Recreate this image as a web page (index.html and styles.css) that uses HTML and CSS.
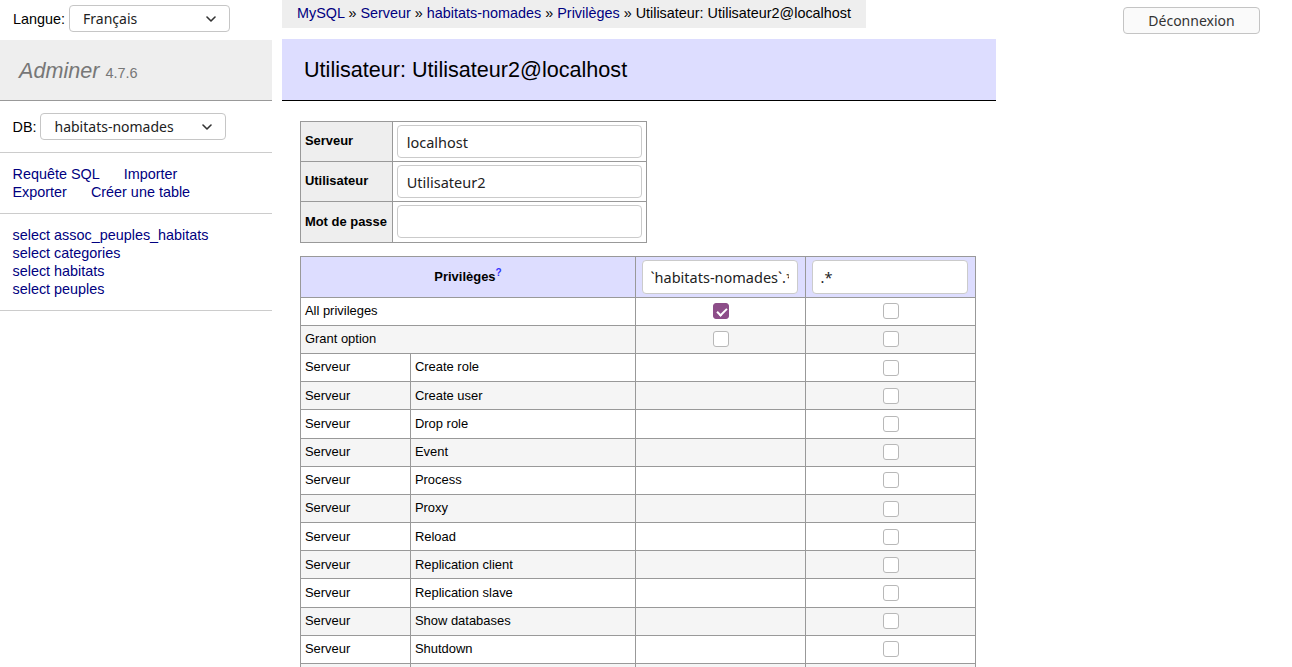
FILE: index.html
```html
<!DOCTYPE html>
<html lang="fr">
<head>
<meta charset="utf-8">
<title>Privilèges: Utilisateur2@localhost - Adminer</title>
<link rel="stylesheet" href="styles.css">
</head>
<body>
<aside class="side">
  <form class="lang">
    <label for="lang">Langue:</label>
    <span class="sel sel-lang">
      <select id="lang"><option>Français</option></select>
      <svg width="10" height="6" viewBox="0 0 10 6"><path d="M1 1l4 4 4-4" fill="none" stroke="#333" stroke-width="1.6" stroke-linecap="round" stroke-linejoin="round"/></svg>
    </span>
  </form>
  <h1><a class="brand" href="#">Adminer</a> <span class="version">4.7.6</span></h1>
  <div class="menu">
    <p class="dbs">
      <label for="db">DB:</label>
      <span class="sel sel-db">
        <select id="db"><option>habitats-nomades</option></select>
        <svg width="10" height="6" viewBox="0 0 10 6"><path d="M1 1l4 4 4-4" fill="none" stroke="#333" stroke-width="1.6" stroke-linecap="round" stroke-linejoin="round"/></svg>
      </span>
    </p>
    <p class="links"><a href="#">Requête SQL</a> <a href="#">Importer</a> <a href="#">Exporter</a> <a href="#">Créer une table</a></p>
    <ul class="tables">
      <li><a href="#">select</a> <a href="#">assoc_peuples_habitats</a></li>
      <li><a href="#">select</a> <a href="#">categories</a></li>
      <li><a href="#">select</a> <a href="#">habitats</a></li>
      <li><a href="#">select</a> <a href="#">peuples</a></li>
    </ul>
  </div>
</aside>

<main class="main">
  <nav class="crumb"><a href="#">MySQL</a> » <a href="#">Serveur</a> » <a href="#">habitats-nomades</a> » <a href="#">Privilèges</a> » Utilisateur: Utilisateur2@localhost</nav>
  <div class="content">
    <h2>Utilisateur: Utilisateur2@localhost</h2>
    <form>
      <table class="login">
        <tr><th>Serveur</th><td><input class="txt" value="localhost"></td></tr>
        <tr><th>Utilisateur</th><td><input class="txt" value="Utilisateur2"></td></tr>
        <tr><th>Mot de passe</th><td><input class="txt" type="text" value=""></td></tr>
      </table>
      <table class="grants">
        <colgroup><col class="g1"><col class="g2"><col class="g3"><col class="g4"></colgroup>
        <thead>
          <tr><th colspan="2">Privilèges<sup><a href="#" class="help">?</a></sup></th><td><input class="txt obj" value="`habitats-nomades`.*"></td><td><input class="txt obj" value=".*"></td></tr>
        </thead>
        <tbody>
          <tr><td colspan="2">All privileges</td><td class="c"><input type="checkbox" class="cb" checked></td><td class="c"><input type="checkbox" class="cb"></td></tr>
          <tr><td colspan="2">Grant option</td><td class="c"><input type="checkbox" class="cb"></td><td class="c"><input type="checkbox" class="cb"></td></tr>
          <tr><td>Serveur</td><td>Create role</td><td></td><td class="c"><input type="checkbox" class="cb"></td></tr>
          <tr><td>Serveur</td><td>Create user</td><td></td><td class="c"><input type="checkbox" class="cb"></td></tr>
          <tr><td>Serveur</td><td>Drop role</td><td></td><td class="c"><input type="checkbox" class="cb"></td></tr>
          <tr><td>Serveur</td><td>Event</td><td></td><td class="c"><input type="checkbox" class="cb"></td></tr>
          <tr><td>Serveur</td><td>Process</td><td></td><td class="c"><input type="checkbox" class="cb"></td></tr>
          <tr><td>Serveur</td><td>Proxy</td><td></td><td class="c"><input type="checkbox" class="cb"></td></tr>
          <tr><td>Serveur</td><td>Reload</td><td></td><td class="c"><input type="checkbox" class="cb"></td></tr>
          <tr><td>Serveur</td><td>Replication client</td><td></td><td class="c"><input type="checkbox" class="cb"></td></tr>
          <tr><td>Serveur</td><td>Replication slave</td><td></td><td class="c"><input type="checkbox" class="cb"></td></tr>
          <tr><td>Serveur</td><td>Show databases</td><td></td><td class="c"><input type="checkbox" class="cb"></td></tr>
          <tr><td>Serveur</td><td>Shutdown</td><td></td><td class="c"><input type="checkbox" class="cb"></td></tr>
          <tr><td>Serveur</td><td>Super</td><td></td><td class="c"><input type="checkbox" class="cb"></td></tr>
          <tr><td>Serveur</td><td>Create tablespace</td><td></td><td class="c"><input type="checkbox" class="cb"></td></tr>
          <tr><td>Serveur</td><td>APPLICATION_PASSWORD_ADMIN</td><td></td><td class="c"><input type="checkbox" class="cb"></td></tr>
          <tr><td>Serveur</td><td>AUDIT_ABORT_EXEMPT</td><td></td><td class="c"><input type="checkbox" class="cb"></td></tr>
          <tr><td>Serveur</td><td>AUDIT_ADMIN</td><td></td><td class="c"><input type="checkbox" class="cb"></td></tr>
          <tr><td>Serveur</td><td>AUTHENTICATION_POLICY_ADMIN</td><td></td><td class="c"><input type="checkbox" class="cb"></td></tr>
          <tr><td>Serveur</td><td>BACKUP_ADMIN</td><td></td><td class="c"><input type="checkbox" class="cb"></td></tr>
          <tr><td>Serveur</td><td>BINLOG_ADMIN</td><td></td><td class="c"><input type="checkbox" class="cb"></td></tr>
          <tr><td>Serveur</td><td>BINLOG_ENCRYPTION_ADMIN</td><td></td><td class="c"><input type="checkbox" class="cb"></td></tr>
          <tr><td>Serveur</td><td>CLONE_ADMIN</td><td></td><td class="c"><input type="checkbox" class="cb"></td></tr>
          <tr><td>Serveur</td><td>CONNECTION_ADMIN</td><td></td><td class="c"><input type="checkbox" class="cb"></td></tr>
          <tr><td>Serveur</td><td>ENCRYPTION_KEY_ADMIN</td><td></td><td class="c"><input type="checkbox" class="cb"></td></tr>
          <tr><td>Serveur</td><td>FIREWALL_EXEMPT</td><td></td><td class="c"><input type="checkbox" class="cb"></td></tr>
          <tr><td>Serveur</td><td>FLUSH_OPTIMIZER_COSTS</td><td></td><td class="c"><input type="checkbox" class="cb"></td></tr>
          <tr><td>Serveur</td><td>FLUSH_STATUS</td><td></td><td class="c"><input type="checkbox" class="cb"></td></tr>
          <tr><td>Serveur</td><td>FLUSH_TABLES</td><td></td><td class="c"><input type="checkbox" class="cb"></td></tr>
          <tr><td>Serveur</td><td>FLUSH_USER_RESOURCES</td><td></td><td class="c"><input type="checkbox" class="cb"></td></tr>
          <tr><td>Serveur</td><td>GROUP_REPLICATION_ADMIN</td><td></td><td class="c"><input type="checkbox" class="cb"></td></tr>
          <tr><td>Serveur</td><td>GROUP_REPLICATION_STREAM</td><td></td><td class="c"><input type="checkbox" class="cb"></td></tr>
          <tr><td>Serveur</td><td>INNODB_REDO_LOG_ARCHIVE</td><td></td><td class="c"><input type="checkbox" class="cb"></td></tr>
          <tr><td>Serveur</td><td>INNODB_REDO_LOG_ENABLE</td><td></td><td class="c"><input type="checkbox" class="cb"></td></tr>
          <tr><td>Serveur</td><td>PASSWORDLESS_USER_ADMIN</td><td></td><td class="c"><input type="checkbox" class="cb"></td></tr>
          <tr><td>Serveur</td><td>PERSIST_RO_VARIABLES_ADMIN</td><td></td><td class="c"><input type="checkbox" class="cb"></td></tr>
          <tr><td>Serveur</td><td>REPLICATION_APPLIER</td><td></td><td class="c"><input type="checkbox" class="cb"></td></tr>
          <tr><td>Serveur</td><td>REPLICATION_SLAVE_ADMIN</td><td></td><td class="c"><input type="checkbox" class="cb"></td></tr>
          <tr><td>Serveur</td><td>RESOURCE_GROUP_ADMIN</td><td></td><td class="c"><input type="checkbox" class="cb"></td></tr>
          <tr><td>Serveur</td><td>RESOURCE_GROUP_USER</td><td></td><td class="c"><input type="checkbox" class="cb"></td></tr>
          <tr><td>Serveur</td><td>ROLE_ADMIN</td><td></td><td class="c"><input type="checkbox" class="cb"></td></tr>
          <tr><td>Serveur</td><td>SENSITIVE_VARIABLES_OBSERVER</td><td></td><td class="c"><input type="checkbox" class="cb"></td></tr>
          <tr><td>Serveur</td><td>SERVICE_CONNECTION_ADMIN</td><td></td><td class="c"><input type="checkbox" class="cb"></td></tr>
          <tr><td>Serveur</td><td>SESSION_VARIABLES_ADMIN</td><td></td><td class="c"><input type="checkbox" class="cb"></td></tr>
          <tr><td>Serveur</td><td>SET_USER_ID</td><td></td><td class="c"><input type="checkbox" class="cb"></td></tr>
          <tr><td>Serveur</td><td>SHOW_ROUTINE</td><td></td><td class="c"><input type="checkbox" class="cb"></td></tr>
          <tr><td>Serveur</td><td>SYSTEM_USER</td><td></td><td class="c"><input type="checkbox" class="cb"></td></tr>
          <tr><td>Serveur</td><td>SYSTEM_VARIABLES_ADMIN</td><td></td><td class="c"><input type="checkbox" class="cb"></td></tr>
          <tr><td>Serveur</td><td>TABLE_ENCRYPTION_ADMIN</td><td></td><td class="c"><input type="checkbox" class="cb"></td></tr>
          <tr><td>Serveur</td><td>TELEMETRY_LOG_ADMIN</td><td></td><td class="c"><input type="checkbox" class="cb"></td></tr>
          <tr><td>Serveur</td><td>XA_RECOVER_ADMIN</td><td></td><td class="c"><input type="checkbox" class="cb"></td></tr>
          <tr><td>Serveur</td><td>File</td><td></td><td class="c"><input type="checkbox" class="cb"></td></tr>
          <tr><td>Base de données</td><td>Create routine</td><td class="c"><input type="checkbox" class="cb"></td><td class="c"><input type="checkbox" class="cb"></td></tr>
          <tr><td>Base de données</td><td>Create temporary tables</td><td class="c"><input type="checkbox" class="cb"></td><td class="c"><input type="checkbox" class="cb"></td></tr>
          <tr><td>Base de données</td><td>Lock tables</td><td class="c"><input type="checkbox" class="cb"></td><td class="c"><input type="checkbox" class="cb"></td></tr>
          <tr><td>Table</td><td>Alter</td><td class="c"><input type="checkbox" class="cb"></td><td class="c"><input type="checkbox" class="cb"></td></tr>
          <tr><td>Table</td><td>Create</td><td class="c"><input type="checkbox" class="cb"></td><td class="c"><input type="checkbox" class="cb"></td></tr>
          <tr><td>Table</td><td>Create view</td><td class="c"><input type="checkbox" class="cb"></td><td class="c"><input type="checkbox" class="cb"></td></tr>
          <tr><td>Table</td><td>Delete</td><td class="c"><input type="checkbox" class="cb"></td><td class="c"><input type="checkbox" class="cb"></td></tr>
          <tr><td>Table</td><td>Drop</td><td class="c"><input type="checkbox" class="cb"></td><td class="c"><input type="checkbox" class="cb"></td></tr>
          <tr><td>Table</td><td>Index</td><td class="c"><input type="checkbox" class="cb"></td><td class="c"><input type="checkbox" class="cb"></td></tr>
          <tr><td>Table</td><td>Insert</td><td class="c"><input type="checkbox" class="cb"></td><td class="c"><input type="checkbox" class="cb"></td></tr>
          <tr><td>Table</td><td>References</td><td class="c"><input type="checkbox" class="cb"></td><td class="c"><input type="checkbox" class="cb"></td></tr>
          <tr><td>Table</td><td>Select</td><td class="c"><input type="checkbox" class="cb"></td><td class="c"><input type="checkbox" class="cb"></td></tr>
          <tr><td>Table</td><td>Show view</td><td class="c"><input type="checkbox" class="cb"></td><td class="c"><input type="checkbox" class="cb"></td></tr>
          <tr><td>Table</td><td>Trigger</td><td class="c"><input type="checkbox" class="cb"></td><td class="c"><input type="checkbox" class="cb"></td></tr>
          <tr><td>Table</td><td>Update</td><td class="c"><input type="checkbox" class="cb"></td><td class="c"><input type="checkbox" class="cb"></td></tr>
          <tr><td>Colonne</td><td>Select</td><td class="c"><input type="checkbox" class="cb"></td><td class="c"><input type="checkbox" class="cb"></td></tr>
          <tr><td>Colonne</td><td>Insert</td><td class="c"><input type="checkbox" class="cb"></td><td class="c"><input type="checkbox" class="cb"></td></tr>
          <tr><td>Colonne</td><td>Update</td><td class="c"><input type="checkbox" class="cb"></td><td class="c"><input type="checkbox" class="cb"></td></tr>
          <tr><td>Colonne</td><td>References</td><td class="c"><input type="checkbox" class="cb"></td><td class="c"><input type="checkbox" class="cb"></td></tr>
          <tr><td>Routine</td><td>Alter routine</td><td class="c"><input type="checkbox" class="cb"></td><td class="c"><input type="checkbox" class="cb"></td></tr>
          <tr><td>Routine</td><td>Execute</td><td class="c"><input type="checkbox" class="cb"></td><td class="c"><input type="checkbox" class="cb"></td></tr>
        </tbody>
      </table>
      <p class="submit"><input type="submit" class="btn" value="Enregistrer"> <input type="submit" class="btn" value="Supprimer"></p>
    </form>
  </div>
</main>

<div class="logout">
  <button type="button" class="btn">Déconnexion</button>
</div>
</body>
</html>
```

FILE: styles.css
```css
body {
  margin: 0;
  color: #000;
  background: #fff;
  font: 14.4px/1.25 "Liberation Sans", Arial, sans-serif;
  display: flex;
  align-items: flex-start;
}

a { color: #000080; text-decoration: none; }

input, select, button { font-family: "Noto Sans", "Open Sans", sans-serif; }

/* select boxes */
.sel { position: relative; display: inline-block; vertical-align: middle; }
.sel select {
  -webkit-appearance: none;
  appearance: none;
  height: 27px;
  box-sizing: border-box;
  border: 1px solid #c6c6c6;
  border-radius: 4px;
  background: #fff;
  color: #222;
  font-size: 14px;
  padding: 0 30px 0 13px;
}
.sel svg { position: absolute; right: 14px; top: 11px; pointer-events: none; }
.sel-lang select { width: 161px; }
.sel-db select { width: 186px; padding-left: 14px; }

/* sidebar */
.side { width: 272px; flex: none; }
.lang {
  display: flex;
  align-items: center;
  gap: 4px;
  padding: 5px 13px 8px;
  margin: 0;
}
h1 {
  margin: 0;
  height: 27px;
  font-size: 21.6px;
  line-height: 27px;
  font-weight: normal;
  padding: 16.5px 19px;
  background: #eee;
  border-bottom: 1px solid #999;
  color: #777;
}
.brand { color: #777; font-style: italic; }
.version { color: #777; font-size: 14.5px; line-height: 1; }

.menu p, .tables {
  margin: 0;
  padding: 12px 12.5px;
  border-bottom: 1px solid #ccc;
}
.dbs { display: flex; align-items: center; gap: 3px; }
.links a { white-space: nowrap; margin-right: 20px; }
.tables { list-style: none; }

/* main */
.main { margin-left: 10px; flex: none; }
.crumb {
  display: inline-block;
  white-space: nowrap;
  background: #eee;
  height: 28px;
  line-height: 26px;
  padding: 0 15px;
  vertical-align: top;
}
.content { padding: 11px 0 20px 18px; }
h2 {
  margin: 0 0 20px -18px;
  font-size: 21.6px;
  line-height: 27px;
  font-weight: normal;
  padding: 17px 22px;
  background: #ddf;
  border-bottom: 1px solid #000;
  color: #000;
}

table { border-collapse: collapse; font-size: 12.96px; line-height: 1.25; margin: 0 20px 0 0; }
td, th { border: 1px solid #999; padding: 2.6px 3.9px; }
th { background: #eee; text-align: left; }
.login td, .login th { padding: 3px 3.9px; }
.login tr:last-child td { padding-bottom: 4px; }

.txt {
  box-sizing: border-box;
  height: 33px;
  border: 1px solid #cbcbcb;
  border-radius: 4px;
  background: #fff;
  color: #222;
  font-size: 14.5px;
  padding: 0 9px;
  display: block;
  outline: none;
}
.login .txt { width: 245px; }
.login th { width: 83px; }

.grants { table-layout: fixed; width: 675px; margin-top: 13px; }
.g1 { width: 110px; }
.g2 { width: 225px; }
.g3 { width: 170px; }
.g4 { width: 170px; }
.grants thead th, .grants thead td { background: #ddf; padding-top: 3px; padding-bottom: 2.6px; }
.grants thead td { padding-left: 5.5px; }
.grants thead th { text-align: center; }
.grants .obj { width: 156px; height: 34px; padding: 0 8px; }
.help { color: #3333ff; font-weight: bold; }
sup { font-size: 10px; line-height: 0; }
.grants tbody tr:nth-child(even) td { background: #f5f5f5; }
.grants tbody td { height: 22px; }
.c { text-align: center; }

.cb {
  -webkit-appearance: none;
  appearance: none;
  width: 16px;
  height: 16px;
  margin: 3px 3px 3px 4px;
  border: 1px solid #b8b8b8;
  border-radius: 3px;
  background: #fff;
  vertical-align: middle;
  position: relative;
  box-sizing: border-box;
}
.cb:checked { background: #8d4e89; border-color: #8d4e89; }
.cb:checked::after {
  content: "";
  position: absolute;
  left: 4.5px;
  top: 1.5px;
  width: 4px;
  height: 8px;
  border: solid #fff;
  border-width: 0 2px 2px 0;
  transform: rotate(45deg);
}

.submit { margin: 14px 0 0; }

.btn {
  height: 27px;
  border: 1px solid #c4c4c4;
  border-radius: 4px;
  background: #fafafa;
  color: #333;
  font-size: 14px;
  padding: 0 12px;
}

.logout {
  flex: 1;
  display: flex;
  justify-content: flex-end;
  padding: 7px 32px 0 0;
}
.logout .btn { width: 137px; }
```
